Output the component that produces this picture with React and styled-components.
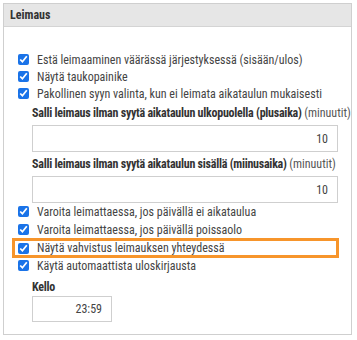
import React from "react";
import styled, { createGlobalStyle } from "styled-components";

const Global = createGlobalStyle`
  body {
    margin: 0;
    background: #fff;
    font-family: "Roboto Condensed", Roboto, "Liberation Sans", sans-serif;
    font-size: 12px;
    color: #333;
  }
`;

const Panel = styled.section`
  margin: 3px;
  width: 349px;
  border: 1px solid #cfcfcf;
  box-sizing: border-box;
`;

Panel.Header = styled.div`
  height: 22px;
  display: flex;
  align-items: center;
  padding-left: 6px;
  background: #e6e6e6;
  border-bottom: 1px solid #d4d4d4;
  font-weight: 700;
  color: #333;
`;

Panel.Body = styled.div`
  padding: 24px 15px 12px 14px;
`;

const Checks = styled.div`
  display: flex;
  flex-direction: column;
  gap: ${({ gap }) => gap || 0}px;
`;

const Row = styled.label`
  display: flex;
  align-items: center;
  gap: 8px;
  color: #444;
  white-space: nowrap;
  box-sizing: border-box;
  border: 3px solid ${({ highlight }) => (highlight ? "#f7952b" : "transparent")};
  margin: 0 -3px 0 -6px;
  padding-left: 3px;
  height: ${({ highlight }) => (highlight ? 20 : 17)}px;
  ${({ highlight }) => (highlight ? "margin-top: -1px; margin-bottom: -2px;" : "border-width: 0; padding-left: 6px;")}

  input {
    margin: 0;
    width: 11px;
    height: 11px;
    accent-color: #1a73e8;
  }
`;

const Field = styled.div`
  display: flex;
  flex-direction: column;
  margin: ${({ m }) => m};
`;

Field.Label = styled.div`
  font-weight: 700;
  letter-spacing: -0.25px;
  color: #333;
  line-height: 14px;
  margin-bottom: ${({ gap }) => (gap === undefined ? 5 : gap)}px;
  white-space: nowrap;

  span {
    font-weight: 400;
    letter-spacing: 0;
    color: #555;
  }
`;

Field.Input = styled.div`
  box-sizing: border-box;
  width: ${({ w }) => w}px;
  height: ${({ h }) => h || 27}px;
  border: 1px solid #cfcfcf;
  display: flex;
  align-items: center;
  justify-content: flex-end;
  padding-right: 9px;
  color: #444;
`;

const items = [
  "Estä leimaaminen väärässä järjestyksessä (sisään/ulos)",
  "Näytä taukopainike",
  "Pakollinen syyn valinta, kun ei leimata aikataulun mukaisesti",
];

const items2 = [
  "Varoita leimattaessa, jos päivällä ei aikataulua",
  "Varoita leimattaessa, jos päivällä poissaolo",
  "Näytä vahvistus leimauksen yhteydessä",
  "Käytä automaattista uloskirjausta",
];

const Check = ({ text, highlight }) => (
  <Row highlight={highlight}>
    <input type="checkbox" defaultChecked />
    {text}
  </Row>
);

export default function App() {
  return (
    <>
      <Global />
      <Panel>
        <Panel.Header>Leimaus</Panel.Header>
        <Panel.Body>
          <Checks>
            {items.map((t) => (
              <Check key={t} text={t} />
            ))}
          </Checks>
          <Field m="4px 0 0 14px">
            <Field.Label>
              Salli leimaus ilman syytä aikataulun ulkopuolella (plusaika) <span>(minuutit)</span>
            </Field.Label>
            <Field.Input w={306}>10</Field.Input>
          </Field>
          <Field m="5px 0 0 14px">
            <Field.Label>
              Salli leimaus ilman syytä aikataulun sisällä (miinusaika) <span>(minuutit)</span>
            </Field.Label>
            <Field.Input w={306}>10</Field.Input>
          </Field>
          <Checks gap={1}>
            {items2.map((t, i) => (
              <Check key={t} text={t} highlight={i === 2} />
            ))}
          </Checks>
          <Field m="6px 0 0 14px">
            <Field.Label gap={2}>Kello</Field.Label>
            <Field.Input w={80} h={26}>23:59</Field.Input>
          </Field>
        </Panel.Body>
      </Panel>
    </>
  );
}
